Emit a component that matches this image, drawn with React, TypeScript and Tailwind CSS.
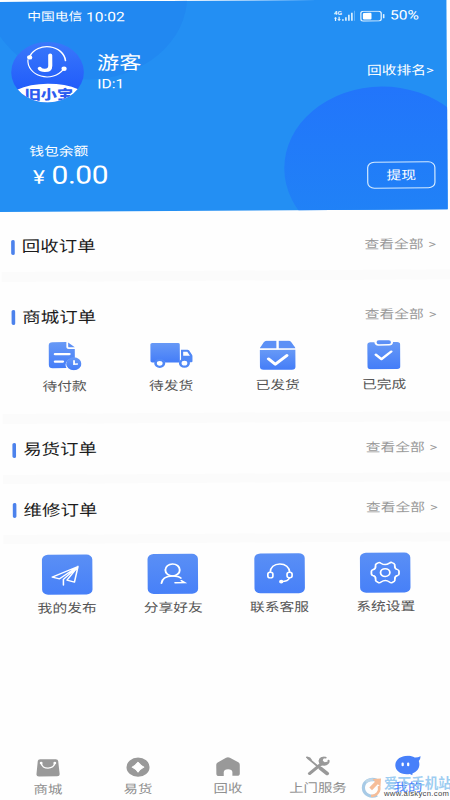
import React from "react";

// Order icons
function PendingPayIcon() {
    return (
        <svg viewBox="0 0 28 29" className="w-7 h-[29px]" fill="none">
            <path d="M4 0.5H15.5V5.5C15.5 6.8 16.2 7.5 17.5 7.5H22.5V16.5A7 7 0 0 0 15.5 26.5H4A3.2 3.2 0 0 1 0.8 23.3V3.7A3.2 3.2 0 0 1 4 0.5Z" fill="url(#blue)" />
            <path d="M17 0.8L22.5 5.8H18.2C17.4 5.8 17 5.4 17 4.6Z" fill="#5e90f5" />
            <path d="M6 12.5H18M6 20H12.5" stroke="#fff" strokeWidth="2.2" strokeLinecap="round" />
            <circle cx="21.6" cy="22.2" r="6.4" fill="url(#blue)" />
            <path d="M21.8 18.6V22.6H25" stroke="#fff" strokeWidth="1.5" />
        </svg>
    );
}

function TruckIcon() {
    return (
        <svg viewBox="0 0 36 27" className="w-9 h-[27px]" fill="none">
            <path d="M2 1H23.5Q25 1 25 2.5V20.5H12.5A4.5 4.5 0 0 0 4 20.5H2Q0.5 20.5 0.5 19V2.5Q0.5 1 2 1Z" fill="url(#blue)" />
            <path fillRule="evenodd" d="M26 8H31.4Q32.3 8 32.8 8.8L35 12.7Q35.5 13.5 35.5 14.5V19.5Q35.5 20.5 34.5 20.5H33A4.5 4.5 0 0 0 26 19ZM27.8 10V14H33.4L31.2 10Z" fill="#5088f6" />
            <circle cx="8.2" cy="21.3" r="3.5" stroke="#5088f6" strokeWidth="2.2" fill="#fff" />
            <circle cx="28.8" cy="21.3" r="3.5" stroke="#5088f6" strokeWidth="2.2" fill="#fff" />
        </svg>
    );
}

function ShippedIcon() {
    return (
        <svg viewBox="0 0 31 30" className="w-[31px] h-[30px]" fill="none">
            <path d="M6.2 0.5H14.5V8H0.7Q1 6.8 1.8 5.8L4 2Q5 0.5 6.2 0.5ZM16.5 0.5H24.8Q26 0.5 27 2L29.2 5.8Q30 6.8 30.3 8H16.5Z" fill="#5c90f6" />
            <path d="M0.7 9.6H30.3V26.5Q30.3 29.5 27.3 29.5H3.7Q0.7 29.5 0.7 26.5Z" fill="url(#blue)" />
            <path d="M7.8 18.5L13.5 24L23.2 15.2" stroke="#fff" strokeWidth="2.7" strokeLinecap="round" strokeLinejoin="round" />
        </svg>
    );
}

function DoneIcon() {
    return (
        <svg viewBox="0 0 28 30" className="w-7 h-[30px]" fill="none">
            <path d="M3 2.5H6.2Q6.5 6 9.5 6H18.5Q21.5 6 21.8 2.5H25Q27.7 2.5 27.7 5.2V26.8Q27.7 29.5 25 29.5H3Q0.3 29.5 0.3 26.8V5.2Q0.3 2.5 3 2.5Z" fill="url(#blue)" />
            <rect x="8" y="0.7" width="12" height="3.8" rx="1.9" fill="#5c90f6" />
            <path d="M7.3 15L12 19.5L20.2 12" stroke="#fff" strokeWidth="2.2" strokeLinecap="round" strokeLinejoin="round" />
        </svg>
    );
}

// Tool icons, drawn in a 42x40 tile
const TOOL_SVG = "w-[42px] h-10";

function SendIcon() {
    return (
        <svg viewBox="0 0 42 40" className={TOOL_SVG} fill="none" stroke="#fff" strokeWidth="1.3" strokeLinejoin="round" strokeLinecap="round">
            <path d="M30 12L8.5 22.4L14.6 24.2L30 12L27 27.5L20.8 25.6L30 12L17.8 24.8V30.5" />
        </svg>
    );
}

function ShareIcon() {
    return (
        <svg viewBox="0 0 42 40" className={TOOL_SVG} fill="none" stroke="#fff" strokeWidth="1.6" strokeLinecap="round">
            <circle cx="20.8" cy="16" r="6" />
            <path d="M11.5 29.3C11.8 25.2 14.8 22 20.8 22C24 22 26.3 22.8 27.6 24.2" />
            <path d="M22.8 28.8H30.8L28 26.8" strokeWidth="1.4" />
        </svg>
    );
}

function ServiceIcon() {
    return (
        <svg viewBox="0 0 42 40" className={TOOL_SVG} fill="none" stroke="#fff" strokeWidth="1.4" strokeLinecap="round">
            <path d="M13.2 19C13.4 14 16.5 10.7 21.2 10.7S29.2 14 29.4 19M29.2 24.6C28.5 27 26 28.3 22.5 28.4" />
            <rect x="11.2" y="19" width="4.2" height="5.6" rx="2" />
            <rect x="27.2" y="19" width="4.2" height="5.6" rx="2" />
            <circle cx="22.3" cy="28.4" r="1.1" fill="#fff" />
        </svg>
    );
}

function GearIcon() {
    return (
        <svg viewBox="0 0 42 40" className={TOOL_SVG} fill="none" stroke="#fff" strokeWidth="1.5" strokeLinejoin="round">
            <path d="M15 10.2Q16.2 9.3 17.5 10.6Q21 13.4 24.5 10.6Q25.8 9.3 27 10.2L28.4 11.2Q29.3 12 29 13.3Q28.8 16.5 31.3 17.1Q32.5 17.5 32.5 18.8V21.2Q32.5 22.5 31.3 22.9Q28.8 23.5 29 26.7Q29.3 28 28.4 28.8L27 29.8Q25.8 30.7 24.5 29.4Q21 26.6 17.5 29.4Q16.2 30.7 15 29.8L13.6 28.8Q12.7 28 13 26.7Q13.2 23.5 10.7 22.9Q9.5 22.5 9.5 21.2V18.8Q9.5 17.5 10.7 17.1Q13.2 16.5 13 13.3Q12.7 12 13.6 11.2Z" />
            <circle cx="21" cy="20" r="3.9" />
        </svg>
    );
}

// Tab bar icons
function ShopIcon() {
    return (
        <svg viewBox="0 0 20 20" className="w-5 h-5" fill="none">
            <path d="M3.5 1.5H16.5Q18.3 1.5 18.5 3.3L19.7 16.5Q19.8 18.7 17.6 18.7H2.4Q0.2 18.7 0.3 16.5L1.5 3.3Q1.7 1.5 3.5 1.5Z" fill="#999" />
            <path d="M4.3 5.2C5 12.2 15 12.2 15.7 5.2" stroke="#fff" strokeWidth="1.4" strokeLinecap="round" />
            <circle cx="4.3" cy="5.3" r="1.2" fill="#fff" />
            <circle cx="15.7" cy="5.3" r="1.2" fill="#fff" />
        </svg>
    );
}

function TradeIcon() {
    return (
        <svg viewBox="0 0 20 20" className="w-5 h-5">
            <circle cx="10" cy="10" r="9.6" fill="#999" />
            <path d="M10 5.2Q11.8 8.2 14.8 10Q11.8 11.8 10 14.8Q8.2 11.8 5.2 10Q8.2 8.2 10 5.2Z" fill="#fff" stroke="#fff" strokeLinejoin="round" />
        </svg>
    );
}

function RecycleIcon() {
    return (
        <svg viewBox="0 0 20 20" className="w-5 h-5">
            <path d="M8.4 1.1Q10 0 11.6 1.1L18.6 5.8Q19.8 6.7 19.8 8.2V17Q19.8 19.3 17.5 19.3H13.6V15.5Q13.4 12.6 10 12.6T6.4 15.5V19.3H2.5Q0.2 19.3 0.2 17V8.2Q0.2 6.7 1.4 5.8Z" fill="#999" />
        </svg>
    );
}

function RepairIcon() {
    return (
        <svg viewBox="0 0 20 20" className="w-5 h-5" fill="none" stroke="#999" strokeLinecap="round">
            <path d="M1.5 2L9.5 10" strokeWidth="1.7" />
            <path d="M0.8 1.2L3 2L4.2 4" strokeWidth="1.6" />
            <path d="M12 12.2L17.5 17.6" strokeWidth="3.4" />
            <path d="M3 17.5L12.7 8" strokeWidth="2.9" />
            <path d="M17.2 1.6A4 4 0 1 0 18.6 5.5L15.6 6.3L14 4.7L14.5 2.5Z" fill="#999" stroke="none" />
            <path d="M16.3 1.7A3.7 3.7 0 1 0 18.8 4.6" strokeWidth="1.7" />
        </svg>
    );
}

function MineIcon() {
    return (
        <svg viewBox="0 0 22 20" className="w-[22px] h-5">
            <path d="M10.5 0.3C13 0.3 15 1 16.6 2Q19 2.2 21.5 0.8Q21.6 3.5 20 5.6C21.6 11.5 19 16 14.6 18V19.8L12.5 18.6C5 19.8 0.4 15.5 0.4 9.8C0.4 4.4 4.8 0.3 10.5 0.3Z" fill="#4780fa" />
            <rect x="5.6" y="7" width="1.9" height="3.8" rx="0.95" fill="#fff" />
            <rect x="10.2" y="7" width="1.9" height="3.8" rx="0.95" fill="#fff" />
        </svg>
    );
}

const ORDER_ITEMS = [
    { label: "待付款", icon: PendingPayIcon },
    { label: "待发货", icon: TruckIcon },
    { label: "已发货", icon: ShippedIcon },
    { label: "已完成", icon: DoneIcon },
];

const TOOL_ITEMS = [
    { label: "我的发布", icon: SendIcon },
    { label: "分享好友", icon: ShareIcon },
    { label: "联系客服", icon: ServiceIcon },
    { label: "系统设置", icon: GearIcon },
];

const TAB_ITEMS = [
    { label: "商城", icon: ShopIcon },
    { label: "易货", icon: TradeIcon },
    { label: "回收", icon: RecycleIcon },
    { label: "上门服务", icon: RepairIcon },
    { label: "我的", icon: MineIcon, active: true },
];

function StatusBar() {
    return (
        <div className="flex h-[31px] items-center pl-[22.5px] pr-[23px] pt-px">
            <span className="text-[11.5px]">中国电信</span>
            <span className="ml-[3px] text-[13px]">10:02</span>
            <svg viewBox="0 0 18 12" className="ml-auto w-[18px] h-3" fill="#e9f6ff">
                <text x="0" y="5" fontSize="5.5" fontWeight="700">4G</text>
                <path d="M1.5 7L3 8.5H2V11H1V8.5H0ZM4.5 11.2L3 9.5H4V7H5V9.5H6Z" />
                <path d="M7 9.5h1.3V11H7zM9.5 7.5h1.3V11H9.5zM12 5h1.3v6H12zM14.5 3h1.3v8h-1.3z" />
                <path d="M17 1h.7v10H17z" opacity=".4" />
            </svg>
            <svg viewBox="0 0 21 11" className="ml-1 w-[21px] h-[11px]" fill="none">
                <rect x="0.6" y="0.6" width="17" height="9.8" rx="2.2" stroke="#dff1ff" strokeWidth="1.1" />
                <rect x="2.3" y="2.2" width="7.2" height="6.6" rx="1" fill="#fff" />
                <rect x="19" y="3.3" width="1.3" height="4.4" rx="0.6" fill="#dff1ff" />
            </svg>
            <span className="ml-1 text-[13px]">50%</span>
        </div>
    );
}

function Avatar() {
    return (
        <svg viewBox="0 0 62 61" className="w-[62.5px] h-[61px] shrink-0">
            <defs>
                <clipPath id="avatar">
                    <circle cx="31" cy="30.5" r="30.3" />
                </clipPath>
                <linearGradient id="avatarBg" x1="0" y1="0" x2="0" y2="1">
                    <stop offset="0" stopColor="#3a78fa" />
                    <stop offset="1" stopColor="#1a54fb" />
                </linearGradient>
            </defs>
            <g clipPath="url(#avatar)">
                <rect width="62" height="61" fill="url(#avatarBg)" />
                <ellipse cx="31" cy="62" rx="36" ry="20" fill="#fff" />
                <text x="32" y="57.8" textAnchor="middle" fontSize="13.5" fontWeight="900" fill="#2d5cf0">旧小宝</text>
            </g>
            <g fill="none" stroke="#fff" strokeLinecap="round">
                <path d="M16.5 14A15.5 15.5 0 0 1 46 19" strokeWidth="1.3" />
                <path d="M14.7 18A16 16 0 0 0 44 28" strokeWidth="1" />
                <path d="M33.3 13.5V24Q33.3 28.7 28.8 28.7Q25.5 28.7 24.5 26.8" strokeWidth="3.4" />
            </g>
            <circle cx="16.2" cy="15.6" r="2.2" fill="#fff" />
            <circle cx="44.8" cy="27.2" r="2.2" fill="#fff" />
        </svg>
    );
}

function Header() {
    return (
        <header className="relative -ml-2 mt-0.5 h-[210px] w-[380px] overflow-hidden bg-[#238ff3] pl-2 text-white">
            {/* Decorative circles */}
            <div className="absolute -left-[2px] -top-[88px] size-[166px] rounded-full bg-[#2188f1]" />
            <div className="absolute left-[244px] top-[87px] size-[163px] rounded-full bg-linear-to-b from-[#2275fb] to-[#2085f5]" />

            <div className="relative">
                <StatusBar />
                <div className="flex items-center pl-[7.5px] pt-[9px]">
                    <Avatar />
                    <div className="ml-[10.5px] pt-0.5">
                        <div className="text-[18.5px] leading-[22px]">游客</div>
                        <div className="text-[13px] leading-[19px]">ID:1</div>
                    </div>
                    <div className="ml-auto pr-[11px] pt-px text-[12.3px]">回收排名&gt;</div>
                </div>
                <div className="flex items-end justify-between pl-[23.5px] pr-[10px] pt-[39px]">
                    <div>
                        <div className="text-[12.3px] leading-5">钱包余额</div>
                        <div className="flex items-baseline pl-[3px]">
                            <span className="w-[15.5px] text-[19px] leading-7">¥</span>
                            <span className="text-[25px] leading-[27px] tracking-[-0.4px]">0.00</span>
                        </div>
                    </div>
                    <button className="mb-px h-[27px] w-[57px] rounded-md border border-[#d5ebff] text-[12.3px] leading-6">提现</button>
                </div>
            </div>
        </header>
    );
}

function SectionTitle({ title }: { title: string }) {
    return (
        <div className="flex items-center pl-2 pr-[13px]">
            <span className="h-[15px] w-[3.4px] rounded-full bg-[#4c82ec]" />
            <h2 className="ml-[5.5px] text-[15.4px] leading-6 text-[#1c1c1c]">{title}</h2>
            <span className="ml-auto text-[12.3px] text-[#999]">查看全部</span>
            <span className="ml-1 text-[12.3px] text-[#999]">&gt;</span>
        </div>
    );
}

export default function App() {
    return (
        <div className="relative h-[800px] w-[450px] overflow-hidden bg-[#fefefe] font-['Roboto','Noto_Sans_CJK_SC',sans-serif]">
            <svg className="absolute size-0">
                <defs>
                    <linearGradient id="blue" x1="0" y1="0" x2="0" y2="1">
                        <stop offset="0" stopColor="#6799f6" />
                        <stop offset="1" stopColor="#447df8" />
                    </linearGradient>
                </defs>
            </svg>

            <div className="flex h-[802px] w-[375px] origin-top-left -rotate-[0.36deg] scale-x-120 flex-col">
                <Header />

                <section className="h-[59.5px] pt-[23px]">
                    <SectionTitle title="回收订单" />
                </section>
                <div className="h-2.5 bg-[#fbfbfb]" />

                <section className="h-[132.5px] pt-6">
                    <SectionTitle title="商城订单" />
                    <div className="flex pl-[7.5px] pr-[12.5px] pt-2.5">
                        {ORDER_ITEMS.map(({ label, icon: Icon }) => (
                            <div key={label} className="flex flex-1 flex-col items-center">
                                <div className="flex h-[34px] items-center">
                                    <Icon />
                                </div>
                                <span className="mt-[3px] text-[12.3px] leading-5 text-[#555]">{label}</span>
                            </div>
                        ))}
                    </div>
                </section>
                <div className="h-2.5 bg-[#fbfbfb]" />

                <section className="h-[50.5px] pt-[14px]">
                    <SectionTitle title="易货订单" />
                </section>
                <div className="h-[9px] bg-[#fbfbfb]" />

                <section className="h-[51.5px] pt-[15px]">
                    <SectionTitle title="维修订单" />
                </section>
                <div className="h-[9px] bg-[#fbfbfb]" />

                <section className="flex pl-[8.5px] pr-[12.5px] pt-[10.5px]">
                    {TOOL_ITEMS.map(({ label, icon: Icon }) => (
                        <div key={label} className="flex flex-1 flex-col items-center">
                            <div className="h-10 w-[42px] rounded-[5px] bg-linear-to-b from-[#5a8ff5] to-[#4780f8]">
                                <Icon />
                            </div>
                            <span className="mt-[4.5px] text-[12.3px] leading-5 text-[#555]">{label}</span>
                        </div>
                    ))}
                </section>

                <nav className="-ml-[1.7px] mt-auto flex h-[46px] w-[375px] text-[#8f8f8f]">
                    {TAB_ITEMS.map(({ label, icon: Icon, active }) => (
                        <div key={label} className="flex flex-1 flex-col items-center pt-[2px]">
                            <Icon />
                            <span className={active ? "mt-[2px] text-[12px] leading-5 text-[#4780fa]" : "mt-[2px] text-[12px] leading-5"}>
                                {label}
                            </span>
                        </div>
                    ))}
                </nav>
            </div>

            {/* Site badge */}
            <div className="absolute left-[361px] top-[777px] flex w-[100px]">
                <svg viewBox="0 0 22 22" className="w-[22px] h-[22px] shrink-0 opacity-75" fill="none">
                    <path d="M15.5 3.3A9 8.4 0 1 0 16 18" stroke="#8ab9de" strokeWidth="3.2" />
                    <path d="M5 5A8 8 0 0 1 12 3" stroke="#a9cbe4" strokeWidth="3" />
                    <path d="M11.5 2L20 1.5L19.5 9.5L16.8 7.3L11 13.2L8.3 10.5L14 4.8Z" fill="#f4a877" />
                    <path d="M18 9C19.5 15 15 19 10 19" stroke="#f4a877" strokeWidth="2.6" />
                </svg>
                <div className="flex flex-col pl-px">
                    <span className="whitespace-nowrap text-[13.6px] font-bold leading-[13px] text-[#83c0ee]/80">爱下手机站</span>
                    <span className="font-['Liberation_Sans',sans-serif] text-[7.7px] tracking-[0.3px] leading-[7px] text-[#444]">www.aiskycn.com</span>
                </div>
            </div>
        </div>
    );
}
